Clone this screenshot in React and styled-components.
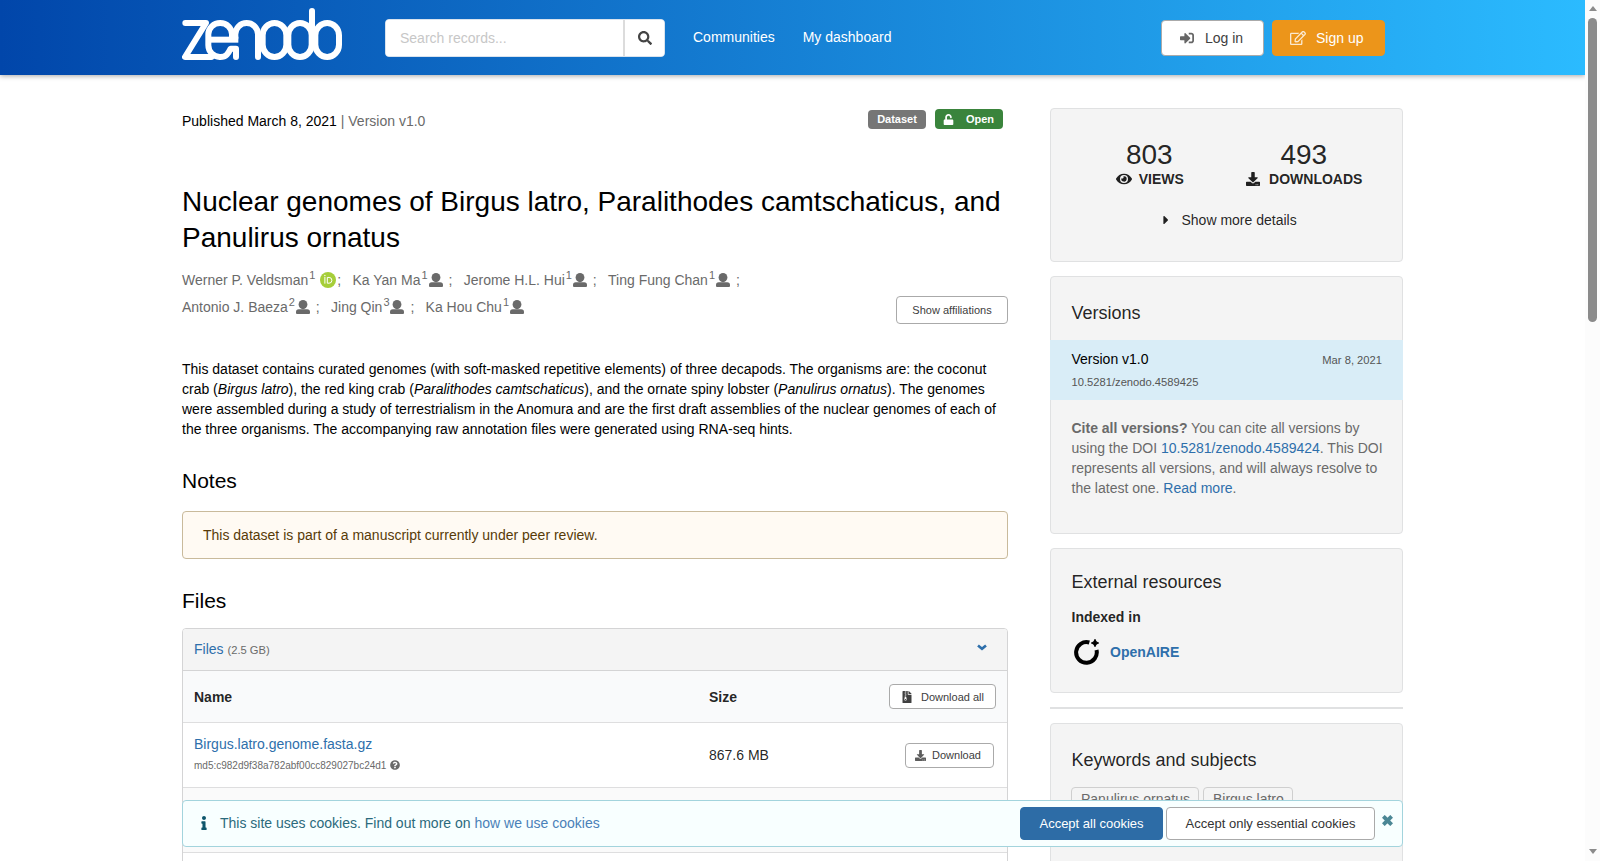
import React from "react";
import styled, { createGlobalStyle } from "styled-components";
import {
    FaSearch,
    FaSignInAlt,
    FaRegEdit,
    FaUnlock,
    FaEye,
    FaDownload,
    FaCaretRight,
    FaFileArchive,
    FaQuestionCircle,
    FaInfo
} from "react-icons/fa";

const GlobalStyle = createGlobalStyle`
  * {
    box-sizing: border-box;
  }
  body {
    margin: 0;
    font-family: "Liberation Sans", Arial, sans-serif;
    font-size: 14px;
    line-height: 20px;
    color: rgba(0, 0, 0, 0.87);
    background: #fff;
  }
  h1, h2, h3, h4, p, ul {
    margin: 0;
    padding: 0;
    font-weight: normal;
  }
  ul {
    list-style: none;
  }
  a {
    color: #2e6fab;
    text-decoration: none;
  }
  svg {
    display: block;
    flex: none;
  }
`;

const Window = styled.div`
  display: flex;
  width: 1600px;
  height: 861px;
  overflow: hidden;
`;

const Page = styled.div`
  width: 1585px;
  height: 100%;
  overflow: hidden;
`;

const Header = styled.header`
  display: flex;
  align-items: center;
  height: 75px;
  padding-left: 182px;
  padding-right: 200px;
  background: linear-gradient(90deg, #0146aa, #2bbbff);
  box-shadow: 0 1px 5px rgba(0, 0, 0, 0.35);
`;

const LogoLink = styled.a`
  margin: 0 43px 7px 0;
`;

const SearchBar = styled.form`
  display: flex;
  width: 280px;
  height: 38px;
  border-radius: 4px;
  overflow: hidden;
  background: #fff;
  border: 1px solid #d9e3ee;
`;

const SearchInput = styled.input`
  width: 239px;
  border: 0;
  border-right: 2px solid #dcdcdc;
  padding: 0 14px;
  font: inherit;
  outline: none;
  &::placeholder {
    color: #c7c7c7;
    opacity: 1;
  }
`;

const SearchButton = styled.button`
  flex: 1;
  display: flex;
  align-items: center;
  justify-content: center;
  border: 0;
  padding: 0;
  background: #fff;
  color: #444;
  font-size: 14px;
`;

const Nav = styled.nav`
  display: flex;
  flex: 1;
  gap: 28px;
  margin: -2px 0 0 28px;
`;

const NavLink = styled.a`
  color: #fff;
`;

const AuthButton = styled.button`
  display: flex;
  align-items: center;
  width: ${props => props.width};
  height: 36px;
  padding: 0 0 0 ${props => (props.accent ? "17px" : "18px")};
  gap: ${props => (props.accent ? "10px" : "11px")};
  margin-left: 8px;
  border: 1px solid ${props => (props.accent ? "#ec951a" : "#aaa")};
  border-radius: 4px;
  background: ${props => (props.accent ? "#ec951a" : "#fff")};
  color: ${props => (props.accent ? "#fff" : "#404040")};
  font: inherit;
  svg {
    opacity: 0.8;
  }
`;

const Container = styled.div`
  display: flex;
  justify-content: space-between;
  width: 1221px;
  margin-left: 182px;
  padding-top: 33px;
`;

const Main = styled.main`
  width: 826px;
  padding-top: 3px;
  color: #000;
`;

const TopRow = styled.div`
  display: flex;
  align-items: center;
  height: 20px;
  padding-right: 5px;
`;

const Published = styled.div`
  flex: 1;
`;

const Muted = styled.span`
  color: #6a6a6a;
`;

const Label = styled.span`
  display: flex;
  align-items: center;
  height: ${props => (props.tall ? "20px" : "19px")};
  margin: ${props => (props.tall ? "-4px 0 0 9px" : "-3px 0 0 9px")};
  padding: ${props => (props.tall ? "0 9px 0 8px" : "0 9px 2px")};
  gap: 12px;
  border-radius: 4px;
  font-size: 11px;
  font-weight: bold;
  color: #fff;
  background: ${props => props.bg};
`;

const Title = styled.h1`
  margin-top: 53px;
  font-size: 28px;
  line-height: 36px;
`;

const CreatorsRow = styled.div`
  display: flex;
  justify-content: space-between;
  align-items: flex-end;
  margin-top: 11px;
  height: 57px;
`;

const Creators = styled.ul`
  display: flex;
  flex-wrap: wrap;
  align-self: flex-start;
  width: 640px;
  line-height: 27px;
  color: #6a6a6a;
`;

const Creator = styled.li`
  display: flex;
  align-items: center;
  height: 27px;
  margin-right: 11.3px;
`;

const Sup = styled.sup`
  margin: -12px 0 0 1px;
  width: 6px;
  font-size: 11px;
  line-height: 12px;
  vertical-align: baseline;
`;

const PersonSvg = styled.svg`
  margin: -1px 6px 0 1px;
`;

const OrcidLink = styled.a`
  margin: -1px 1px 0 5px;
`;

const SmallButton = styled.button`
  display: flex;
  align-items: center;
  justify-content: center;
  gap: ${props => props.gap || "0"};
  width: ${props => props.width};
  height: ${props => props.height || "25px"};
  padding: 0 ${props => props.shift || "0"} 0 0;
  border: 1px solid #aaa;
  border-radius: 4px;
  background: #fff;
  color: #404040;
  font-family: inherit;
  font-size: 11px;
`;

const Description = styled.p`
  margin-top: 35px;
`;

const SectionTitle = styled.h2`
  margin-top: 28px;
  font-size: 21px;
  line-height: 27px;
`;

const Note = styled.div`
  display: flex;
  align-items: center;
  height: 48px;
  margin-top: 17px;
  padding: 0 20px;
  border: 1px solid #c9ba9b;
  border-radius: 4px;
  background: #fffaf3;
  color: #573a08;
`;

const Panel = styled.section`
  margin-top: 14px;
  border: 1px solid #d4d4d5;
  border-radius: 4px 4px 0 0;
  color: rgba(0, 0, 0, 0.87);
  overflow: hidden;
`;

const PanelHeader = styled.div`
  display: flex;
  align-items: center;
  justify-content: space-between;
  height: 42px;
  padding: 0 20px 1px 11px;
  border-bottom: 1px solid #d4d4d5;
  background: #f4f4f4;
  small {
    font-size: 11.2px;
    color: #6a6a6a;
  }
  svg {
    margin-top: -4px;
  }
`;

const FileRow = styled.div`
  display: grid;
  grid-template-columns: 515px 1fr auto;
  align-items: center;
  height: ${props => (props.head ? "52px" : "65px")};
  padding: ${props => (props.head ? "0 11px" : "0 13px 0 11px")};
  border-bottom: 1px solid #dededf;
  background: ${props => (props.head ? "#f9fafb" : props.striped ? "#fafafa" : "#fff")};
  font-weight: ${props => (props.head ? "bold" : "normal")};
`;

const Checksum = styled.div`
  display: flex;
  align-items: center;
  gap: 4px;
  margin-top: 3px;
  padding-bottom: 2px;
  font-size: 10px;
  line-height: 17px;
  color: #6a6a6a;
  svg {
    margin-top: -1px;
  }
`;

const Sidebar = styled.aside`
  display: flex;
  flex-direction: column;
  gap: 14px;
  width: 353px;
`;

const Box = styled.section`
  height: ${props => props.height};
  padding: ${props => props.top} 0 0;
  border: 1px solid #e0e1e2;
  border-radius: 4px;
  background: #f4f4f4;
`;

const Stats = styled.div`
  display: grid;
  grid-template-columns: 1fr 1fr;
  padding: 0 21px;
  text-align: center;
`;

const StatValue = styled.div`
  font-size: 28px;
  line-height: 28px;
`;

const StatLabel = styled.div`
  display: flex;
  align-items: center;
  justify-content: center;
  gap: ${props => props.gap};
  padding-left: 1px;
  font-weight: bold;
`;

const MoreDetails = styled.div`
  display: flex;
  align-items: center;
  gap: 9px;
  margin: 21px 0 0 107.5px;
`;

const BoxTitle = styled.h3`
  padding: 0 20.5px;
  font-size: 18px;
  line-height: 23px;
`;

const CurrentVersion = styled.div`
  height: 60px;
  margin: 15px -1px 0;
  padding: 9px 21px 0 21.5px;
  background: #d9edf7;
  small {
    font-size: 11.2px;
    color: #555;
  }
`;

const VersionLine = styled.div`
  display: flex;
  justify-content: space-between;
  align-items: baseline;
  color: #000;
`;

const Doi = styled.div`
  margin-top: 1px;
`;

const CiteText = styled.p`
  margin-top: 18px;
  padding: 0 16px 0 20.5px;
  color: #6a6a6a;
`;

const Subtitle = styled.h4`
  margin-top: 13px;
  padding: 0 20.5px;
  font-weight: bold;
`;

const Resource = styled.div`
  display: flex;
  align-items: center;
  gap: 11px;
  margin-top: 12px;
  padding-left: 23px;
  font-weight: bold;
`;

const Rule = styled.div`
  height: 2px;
  background: #e0e1e2;
`;

const Tags = styled.div`
  display: flex;
  gap: 4px;
  margin-top: 15px;
  padding: 0 20px;
`;

const Tag = styled.a`
  height: 24px;
  padding: 1px 8px 1px 9px;
  border: 1px solid #cfcfcf;
  border-radius: 4px;
  color: #6a6a6a;
`;

// sits over the page, pinned to the bottom of the window
const CookieBanner = styled.div`
  position: fixed;
  left: 182px;
  top: 800px;
  display: flex;
  align-items: center;
  width: 1221px;
  height: 47px;
  padding: 0 8px 0 14px;
  border: 1px solid #a3d4dd;
  border-radius: 4px;
  background: #f8ffff;
  color: #2b6a7c;
`;

const InfoIcon = styled(FaInfo)`
  margin-top: -1px;
  color: #0e566c;
`;

const CookieText = styled.p`
  flex: 1;
  margin: -1px 0 0 9px;
  a {
    color: #4a81b8;
  }
`;

const CookieButton = styled.button`
  width: ${props => props.width};
  height: 33px;
  margin-left: 3px;
  padding: 0;
  border: 1px solid ${props => (props.primary ? "#2d6ca6" : "#aaa")};
  border-radius: 4px;
  background: ${props => (props.primary ? "#2d6ca6" : "#fff")};
  color: ${props => (props.primary ? "#fff" : "#333")};
  font-family: inherit;
  font-size: 13px;
`;

const CloseSvg = styled.svg`
  margin: -6px 1px 0 7px;
`;

const Scrollbar = styled.div`
  display: flex;
  flex-direction: column;
  align-items: center;
  width: 15px;
  height: 100%;
  padding: 6px 0 7px;
  background: #fcfcfc;
`;

const Arrow = styled.div`
  border-left: 4.5px solid transparent;
  border-right: 4.5px solid transparent;
  border-${props => (props.up ? "bottom" : "top")}: 5px solid #8b8b8b;
`;

const Thumb = styled.div`
  width: 9px;
  height: 304px;
  margin: 7px 0 auto;
  border-radius: 5px;
  background: #8b8b8b;
`;

const Logo = () => (
    <svg
        width="160"
        height="52"
        viewBox="18 18 480 156"
        fill="none"
        stroke="#fff"
        strokeWidth="18"
        strokeLinecap="round"
        strokeLinejoin="round"
    >
        <path d="M28 63H90L27 165H106" />
        <path d="M97 113H187" strokeLinecap="butt" />
        <path d="M168 108V97a35.500 34 0 0 0-71 0V130a35 35 0 0 0 36 35c18 0 24-11 31-25H180V165" />
        <path d="M178 108V97a34 34 0 0 1 68 0V165" />
        <rect x="260" y="63" width="71" height="102" rx="35.500" ry="37" />
        <rect x="337" y="63" width="70" height="102" rx="35" ry="37" />
        <path d="M408 27V125" />
        <rect x="418" y="63" width="71" height="102" rx="35.500" ry="37" />
    </svg>
);

const PersonIcon = () => (
    <PersonSvg width="14" height="14" viewBox="0 0 14 14" fill="currentColor">
        <ellipse cx="7" cy="4.600" rx="4.400" ry="4.600" />
        <path d="M0 13V12a2.800 2.800 0 0 1 2.800-2.800H11.200a2.800 2.800 0 0 1 2.800 2.800v1a1 1 0 0 1-1 1H1a1 1 0 0 1-1-1Z" />
    </PersonSvg>
);

const ChevronIcon = () => (
    <svg width="10" height="7" viewBox="0 0 10 7" fill="none" stroke="#2e6fab" strokeWidth="2.600">
        <path d="M1 1.400 5 4.800 9 1.400" />
    </svg>
);

const CloseIcon = () => (
    <CloseSvg width="11" height="11" viewBox="0 0 11 11">
        <path
            d="M2.700 2.700 8.300 8.300M8.300 2.700 2.700 8.300"
            stroke="#4b8795"
            strokeWidth="3.900"
            strokeLinecap="square"
        />
    </CloseSvg>
);

const OrcidIcon = () => (
    <svg width="16" height="16" viewBox="0 0 256 256">
        <circle cx="128" cy="128" r="128" fill="#a6ce39" />
        <g fill="none" stroke="#fff" strokeWidth="16">
            <path d="M78 79V186M117 87H145a45 46 0 0 1 0 92H117Z" />
        </g>
        <circle cx="78" cy="56" r="11" fill="#fff" />
    </svg>
);

const OpenAireIcon = () => (
    <svg width="25" height="26" viewBox="0 0 75 78">
        <path
            d="M46 10.500A31 31 0 1 0 67.500 33"
            fill="none"
            stroke="#000"
            strokeWidth="12"
        />
        <path d="M63 1Q65 10 74 12Q65 14 63 23Q61 14 52 12Q61 10 63 1Z" stroke="#000" strokeWidth="3" />
    </svg>
);

const creators = [
    { name: "Werner P. Veldsman", affiliation: 1, orcid: true },
    { name: "Ka Yan Ma", affiliation: 1 },
    { name: "Jerome H.L. Hui", affiliation: 1 },
    { name: "Ting Fung Chan", affiliation: 1 },
    { name: "Antonio J. Baeza", affiliation: 2 },
    { name: "Jing Qin", affiliation: 3 },
    { name: "Ka Hou Chu", affiliation: 1 }
];

export default function App() {
    return (
        <Window>
            <GlobalStyle />
            <Page>
                <Header>
                    <LogoLink>
                        <Logo />
                    </LogoLink>
                    <SearchBar>
                        <SearchInput placeholder="Search records..." />
                        <SearchButton type="button" aria-label="Search">
                            <FaSearch />
                        </SearchButton>
                    </SearchBar>
                    <Nav>
                        <NavLink>Communities</NavLink>
                        <NavLink>My dashboard</NavLink>
                    </Nav>
                    <AuthButton width="103px">
                        <FaSignInAlt />
                        Log in
                    </AuthButton>
                    <AuthButton accent="true" width="113px">
                        <FaRegEdit size={16} />
                        Sign up
                    </AuthButton>
                </Header>
                <Container>
                    <Main>
                        <TopRow>
                            <Published>
                                Published March 8, 2021 <Muted>| Version v1.0</Muted>
                            </Published>
                            <Label bg="#767676">Dataset</Label>
                            <Label bg="#3a843c" tall="true">
                                <FaUnlock size={11} />
                                Open
                            </Label>
                        </TopRow>
                        <Title>
                            Nuclear genomes of Birgus latro, Paralithodes camtschaticus, and Panulirus ornatus
                        </Title>
                        <CreatorsRow>
                            <Creators>
                                {creators.map((creator, index) => (
                                    <Creator key={creator.name}>
                                        {creator.name}
                                        <Sup>{creator.affiliation}</Sup>
                                        {creator.orcid ? (
                                            <OrcidLink>
                                                <OrcidIcon />
                                            </OrcidLink>
                                        ) : (
                                            <PersonIcon />
                                        )}
                                        {index < creators.length - 1 && ";"}
                                    </Creator>
                                ))}
                            </Creators>
                            <SmallButton width="112px" height="28px">Show affiliations</SmallButton>
                        </CreatorsRow>
                        <Description>
                            This dataset contains curated genomes (with soft-masked repetitive elements) of three
                            decapods. The organisms are: the coconut crab (<em>Birgus latro</em>), the red king crab
                            (<em>Paralithodes camtschaticus</em>), and the ornate spiny lobster (<em>Panulirus
                            ornatus</em>). The genomes were assembled during a study of terrestrialism in the Anomura
                            and are the first draft assemblies of the nuclear genomes of each of the three organisms.
                            The accompanying raw annotation files were generated using RNA-seq hints.
                        </Description>
                        <SectionTitle>Notes</SectionTitle>
                        <Note>This dataset is part of a manuscript currently under peer review.</Note>
                        <SectionTitle>Files</SectionTitle>
                        <Panel>
                            <PanelHeader>
                                <span>
                                    <a>Files</a> <small>(2.5 GB)</small>
                                </span>
                                <ChevronIcon />
                            </PanelHeader>
                            <FileRow head="true">
                                <span>Name</span>
                                <span>Size</span>
                                <SmallButton width="107px" gap="8px">
                                    <FaFileArchive size={12} />
                                    Download all
                                </SmallButton>
                            </FileRow>
                            <FileRow>
                                <div>
                                    <a>Birgus.latro.genome.fasta.gz</a>
                                    <Checksum>
                                        md5:c982d9f38a782abf00cc829027bc24d1
                                        <FaQuestionCircle />
                                    </Checksum>
                                </div>
                                <span>867.6 MB</span>
                                <SmallButton width="89px" gap="6px" shift="3px">
                                    <FaDownload opacity={0.85} />
                                    Download
                                </SmallButton>
                            </FileRow>
                            <FileRow striped="true" />
                            <FileRow />
                        </Panel>
                    </Main>
                    <Sidebar>
                        <Box height="154px" top="32px">
                            <Stats>
                                <div>
                                    <StatValue>803</StatValue>
                                    <StatLabel gap="7px">
                                        <FaEye size={16} />
                                        VIEWS
                                    </StatLabel>
                                </div>
                                <div>
                                    <StatValue>493</StatValue>
                                    <StatLabel gap="9px">
                                        <FaDownload />
                                        DOWNLOADS
                                    </StatLabel>
                                </div>
                            </Stats>
                            <MoreDetails>
                                <FaCaretRight size={14} />
                                Show more details
                            </MoreDetails>
                        </Box>
                        <Box height="258px" top="25px">
                            <BoxTitle>Versions</BoxTitle>
                            <CurrentVersion>
                                <VersionLine>
                                    Version v1.0
                                    <small>Mar 8, 2021</small>
                                </VersionLine>
                                <Doi>
                                    <small>10.5281/zenodo.4589425</small>
                                </Doi>
                            </CurrentVersion>
                            <CiteText>
                                <b>Cite all versions?</b> You can cite all versions by using the DOI{" "}
                                <a>10.5281/zenodo.4589424</a>. This DOI represents all versions, and will always
                                resolve to the latest one. <a>Read more</a>.
                            </CiteText>
                        </Box>
                        <Box height="145px" top="22px">
                            <BoxTitle>External resources</BoxTitle>
                            <Subtitle>Indexed in</Subtitle>
                            <Resource>
                                <OpenAireIcon />
                                <a>OpenAIRE</a>
                            </Resource>
                        </Box>
                        <Rule />
                        <Box height="200px" top="25px">
                            <BoxTitle>Keywords and subjects</BoxTitle>
                            <Tags>
                                <Tag>Panulirus ornatus</Tag>
                                <Tag>Birgus latro</Tag>
                            </Tags>
                        </Box>
                    </Sidebar>
                </Container>
            </Page>
            <Scrollbar>
                <Arrow up="true" />
                <Thumb />
                <Arrow />
            </Scrollbar>
            <CookieBanner>
                <InfoIcon size={14} />
                <CookieText>
                    This site uses cookies. Find out more on <a>how we use cookies</a>
                </CookieText>
                <CookieButton primary="true" width="143px">Accept all cookies</CookieButton>
                <CookieButton width="209px">Accept only essential cookies</CookieButton>
                <CloseIcon />
            </CookieBanner>
        </Window>
    );
}
